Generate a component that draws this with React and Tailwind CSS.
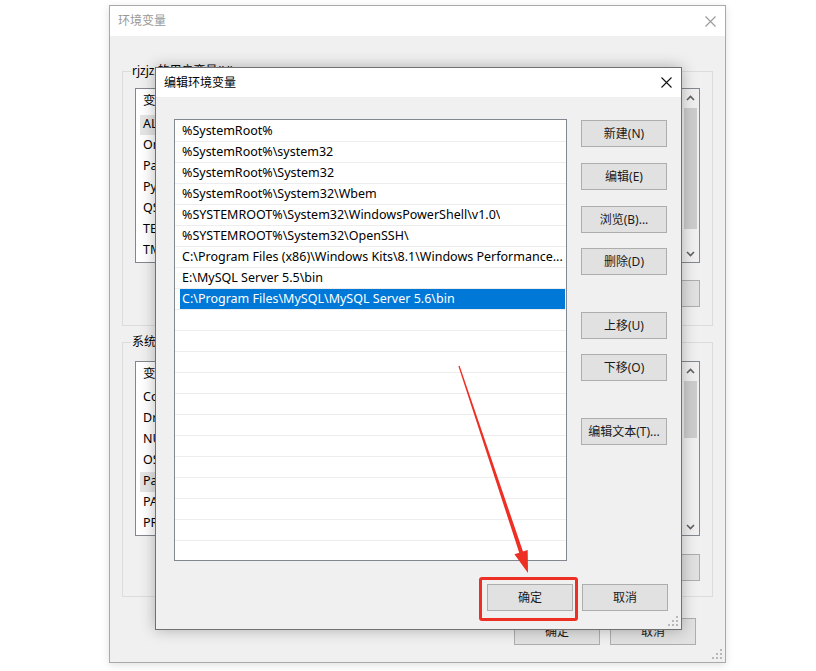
import React from "react";

const font = "font-['Noto_Sans','Noto_Sans_CJK_SC',sans-serif]";

function CloseX({ color }) {
  return (
    <svg width="11" height="11" viewBox="0 0 11 11">
      <path d="M0.5 0.5 L10.5 10.5 M10.5 0.5 L0.5 10.5" stroke={color} strokeWidth="1.1" />
    </svg>
  );
}

function Grip() {
  const dots = [
    [8, 0],
    [4, 4],
    [8, 4],
    [0, 8],
    [4, 8],
    [8, 8],
  ];
  return (
    <svg width="10" height="10" viewBox="0 0 10 10">
      {dots.map(([x, y], i) => (
        <rect key={i} x={x} y={y} width="2" height="2" fill="#b8b8b8" />
      ))}
    </svg>
  );
}

function Chevron({ up }) {
  return (
    <svg width="9" height="6" viewBox="0 0 9 6">
      <path
        d={up ? "M1 5 L4.5 1.5 L8 5" : "M1 1 L4.5 4.5 L8 1"}
        stroke="#606060"
        strokeWidth="1.6"
        fill="none"
      />
    </svg>
  );
}

function ScrollBar({ thumbTop, thumbH }) {
  return (
    <div className="w-[17px] h-full bg-[#f0f0f0] flex flex-col items-center">
      <div className="h-[17px] flex items-center justify-center">
        <Chevron up />
      </div>
      <div className="flex-1 w-full">
        <div className="mx-[2px] bg-[#cdcdcd]" style={{ marginTop: thumbTop, height: thumbH }} />
      </div>
      <div className="h-[17px] flex items-center justify-center">
        <Chevron />
      </div>
    </div>
  );
}

function WinButton({ children, className = "" }) {
  return (
    <button
      className={`h-[27px] w-[86px] border border-[#adadad] bg-[#e1e1e1] text-[12px] text-[#1a1a1a] flex items-center justify-center ${className}`}
    >
      {children}
    </button>
  );
}

function BackList({ rows, selected, thumbTop, thumbH }) {
  return (
    <div className="h-[175px] border border-[#828790] bg-white flex">
      <div className="flex-1 overflow-hidden">
        <div className="h-[25px] flex items-center pl-[7px] text-[12.5px] text-black">
          <span className="w-[200px]">变量</span>
          <span>值</span>
        </div>
        {rows.map((r, i) => (
          <div key={r} className="h-[21px] flex items-center">
            <div
              className={`ml-[4px] h-[20px] w-[300px] flex items-center pl-[3px] text-[12.5px] text-black whitespace-nowrap ${
                i === selected ? "bg-[#e5e5e5]" : ""
              }`}
            >
              {r}
            </div>
          </div>
        ))}
      </div>
      <ScrollBar thumbTop={thumbTop} thumbH={thumbH} />
    </div>
  );
}

const paths = [
  "%SystemRoot%",
  "%SystemRoot%\\system32",
  "%SystemRoot%\\System32",
  "%SystemRoot%\\System32\\Wbem",
  "%SYSTEMROOT%\\System32\\WindowsPowerShell\\v1.0\\",
  "%SYSTEMROOT%\\System32\\OpenSSH\\",
  "C:\\Program Files (x86)\\Windows Kits\\8.1\\Windows Performance...",
  "E:\\MySQL Server 5.5\\bin",
  "C:\\Program Files\\MySQL\\MySQL Server 5.6\\bin",
];

export default function App() {
  const rows = Array.from({ length: 21 }, (_, i) => paths[i] || "");

  return (
    <div className={`relative w-[816px] h-[671px] bg-white overflow-hidden ${font}`}>
      {/* background window: 环境变量 */}
      <div className="ml-[109px] mt-[5px] w-[617px] h-[658px] border border-[#a9a9a9] bg-[#f0f0f0] flex flex-col relative shadow-[0_2px_8px_rgba(0,0,0,0.12)]">
        <div className="h-[30px] bg-white flex items-center justify-between pl-[8px] pr-[9px]">
          <span className="text-[12px] text-[#999999]">环境变量</span>
          <CloseX color="#9a9a9a" />
        </div>
        <div className="px-[12px]">
          <fieldset className="mt-[27px] border border-[#dcdcdc] p-0">
            <legend className="ml-[8px] px-[1px] text-[12px] leading-[16px] text-black">
              rjzjz 的用户变量(U)
            </legend>
            <div className="px-[12px] pb-[18px]">
              <div className="mt-[9px]">
                <BackList
                  rows={["ALIYUN_HOME", "OneDrive", "Path", "PyCharm", "QSYS_ROOTDIR", "TEMP", "TMP"]}
                  selected={0}
                  thumbTop={2}
                  thumbH={121}
                />
              </div>
              <div className="mt-[17px] flex justify-end gap-[9px]">
                <WinButton>新建(N)...</WinButton>
                <WinButton>编辑(E)...</WinButton>
                <WinButton className="w-[85px]">删除(D)</WinButton>
              </div>
            </div>
          </fieldset>
          <fieldset className="mt-[8px] border border-[#dcdcdc] p-0">
            <legend className="ml-[8px] px-[1px] text-[12px] leading-[16px] text-black">
              系统变量(S)
            </legend>
            <div className="px-[12px] pb-[15px]">
              <div className="mt-[11px]">
                <BackList
                  rows={["ComSpec", "DriverData", "NUMBER_OF_PROCESSORS", "OS", "Path", "PATHEXT", "PROCESSOR_ARCHITECTURE"]}
                  selected={4}
                  thumbTop={2}
                  thumbH={57}
                />
              </div>
              <div className="mt-[18px] flex justify-end gap-[9px]">
                <WinButton>新建(W)...</WinButton>
                <WinButton>编辑(I)...</WinButton>
                <WinButton className="w-[85px]">删除(L)</WinButton>
              </div>
            </div>
          </fieldset>
          <div className="mt-[21px] flex justify-end gap-[10px] pr-[17px]">
            <WinButton className="w-[85px]">确定</WinButton>
            <WinButton>取消</WinButton>
          </div>
        </div>
        <div className="absolute right-[3px] bottom-[3px]">
          <Grip />
        </div>
      </div>

      {/* front dialog: 编辑环境变量 */}
      <div className="absolute left-[155px] top-[67px] w-[527px] h-[563px] border border-[#707070] bg-[#f0f0f0] flex flex-col shadow-[0_0_14px_rgba(0,0,0,0.28)]">
        <div className="h-[29px] bg-white flex items-center justify-between pl-[8px] pr-[9px]">
          <span className="text-[12px] text-black">编辑环境变量</span>
          <CloseX color="#111111" />
        </div>
        <div className="pl-[18px] pr-[13px] pt-[22px] flex">
          <div className="w-[393px] h-[442px] border border-[#828790] bg-white overflow-hidden pt-[1px]">
            {rows.map((p, i) => (
              <div key={i} className="h-[21px] border-b border-[#ededed] flex items-start">
                <div
                  className={`ml-[5px] mr-[1px] h-[20px] flex-1 min-w-0 flex items-center pl-[2px] text-[12.5px] ${
                    i === 8 ? "bg-[#0078d7] text-white" : "text-black"
                  }`}
                >
                  <span className="truncate">{p}</span>
                </div>
              </div>
            ))}
          </div>
          <div className="ml-[14px] flex flex-col">
            <WinButton className="mt-[1px]">新建(N)</WinButton>
            <WinButton className="mt-[16px]">编辑(E)</WinButton>
            <WinButton className="mt-[16px]">浏览(B)...</WinButton>
            <WinButton className="mt-[15px]">删除(D)</WinButton>
            <WinButton className="mt-[37px]">上移(U)</WinButton>
            <WinButton className="mt-[15px]">下移(O)</WinButton>
            <WinButton className="mt-[37px]">编辑文本(T)...</WinButton>
          </div>
        </div>
        <div className="mt-[23px] flex justify-end gap-[9px] pr-[13px]">
          <div className="relative">
            <WinButton>确定</WinButton>
            <span className="absolute left-[-8px] right-[-5px] top-[-7px] bottom-[-10px] border-[3px] border-[#ee2f24] rounded-[3px]" />
          </div>
          <WinButton>取消</WinButton>
        </div>
        <div className="absolute right-[3px] bottom-[3px]">
          <Grip />
        </div>
      </div>

      {/* red annotation arrow */}
      <svg className="absolute left-0 top-0 pointer-events-none" width="816" height="671" viewBox="0 0 816 671">
        <polygon
          points="458.4,366.2 519.2,552.7 514.4,554.3 528,573 527.7,549.9 523,551.5 459.6,365.8"
          fill="#ee2f24"
        />
      </svg>
    </div>
  );
}
